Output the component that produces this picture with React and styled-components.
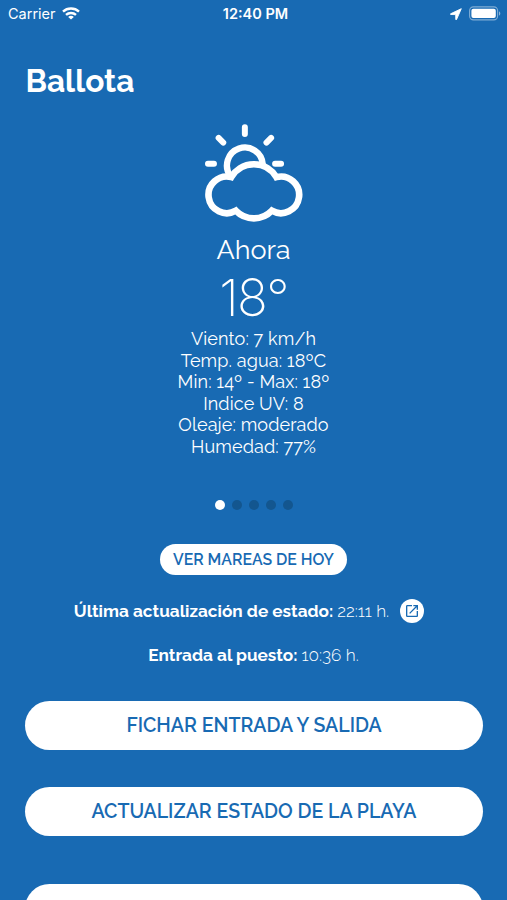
import React from 'react';
import styled, { createGlobalStyle } from 'styled-components';

const BLUE = '#186ab3';

const details = [
  'Viento: 7 km/h',
  'Temp. agua: 18ºC',
  'Min: 14º - Max: 18º',
  'Indice UV: 8',
  'Oleaje: moderado',
  'Humedad: 77%',
];

const slides = [0, 1, 2, 3, 4];

const WifiIcon = () => (
  <svg width="18" height="13" viewBox="0 0 18 13" fill="none" stroke="#fff" strokeWidth="2.4">
    <path d="M1 4.6C5.4.5 12.6.5 17 4.6" />
    <path d="M4 7.9c2.8-2.5 7.2-2.5 10 0" />
    <path d="M6.2 9.9c1.6-1.4 4-1.4 5.6 0L9 12.6z" fill="#fff" stroke="none" />
  </svg>
);

const LocationIcon = () => (
  <svg width="12" height="12" viewBox="0 0 12 12" fill="#fff" stroke="#fff" strokeWidth=".9" strokeLinejoin="round">
    <path d="M11.3.7.6 5.8c-.4.3-.3.6.2.7l4.9.1.1 4.9c0 .4.5.5.7.1z" />
  </svg>
);

const BatteryIcon = () => (
  <svg width="32" height="15" viewBox="0 0 32 15">
    <rect x=".6" y=".9" width="28" height="13" rx="3.8" fill="none" stroke="#fff" strokeOpacity=".45" strokeWidth="1.1" />
    <rect x="2.4" y="2.8" width="24.4" height="9.2" rx="2" fill="#fff" />
    <path d="M30 5.2c1.8.7 1.8 3.8 0 4.5z" fill="#fff" fillOpacity=".5" />
  </svg>
);

const WeatherIcon = () => (
  <svg width="98" height="98" viewBox="45 40 295 295" fill="none" stroke="#fff" strokeLinecap="round">
    <path strokeWidth="18" d="M165 50v20M86 82l14 14M244 82l-14 14M54 160h18M256 160h18" />
    <path strokeWidth="19" strokeLinecap="butt" d="M121 196A54 54 0 1 1 219 162" />
    <path
      strokeWidth="20"
      strokeLinejoin="miter"
      d="M124 200A79 79 0 0 1 260 200A55 55 0 1 1 246 301A75 75 0 0 1 138 301A55 55 0 1 1 124 200Z"
    />
  </svg>
);

const OpenIcon = () => (
  <svg width="16" height="16" viewBox="0 0 24 24" fill={BLUE}>
    <path d="M19 19H5V5h7V3H5a2 2 0 0 0-2 2v14a2 2 0 0 0 2 2h14c1.1 0 2-.9 2-2v-7h-2v7zM14 3v2h3.59l-9.83 9.83 1.41 1.41L19 6.41V10h2V3h-7z" />
  </svg>
);

const App = () => (
  <Screen>
    <GlobalStyle />
    <StatusBar>
      <StatusLeft>
        Carrier
        <WifiIcon />
      </StatusLeft>
      <Clock>12:40 PM</Clock>
      <StatusRight>
        <LocationIcon />
        <BatteryIcon />
      </StatusRight>
    </StatusBar>

    <Title>Ballota</Title>

    <Weather>
      <WeatherIcon />
      <Moment>Ahora</Moment>
      <Temperature>18°</Temperature>
      {details.map(detail => (
        <Detail key={detail}>{detail}</Detail>
      ))}
    </Weather>

    <Dots>
      {slides.map(slide => (
        <Dot key={slide} $active={slide === 0} />
      ))}
    </Dots>

    <TidesButton>VER MAREAS DE HOY</TidesButton>

    <StateRow>
      <InfoLabel>Última actualización de estado:</InfoLabel>
      <InfoValue>22:11 h.</InfoValue>
      <RoundButton aria-label="Abrir">
        <OpenIcon />
      </RoundButton>
    </StateRow>
    <InfoRow>
      <InfoLabel>Entrada al puesto:</InfoLabel>
      <InfoValue>10:36 h.</InfoValue>
    </InfoRow>

    <Actions>
      <ActionButton>FICHAR ENTRADA Y SALIDA</ActionButton>
      <ActionButton $gap={37}>ACTUALIZAR ESTADO DE LA PLAYA</ActionButton>
      <ActionButton $gap={48} />
    </Actions>
  </Screen>
);

// Styled components
const GlobalStyle = createGlobalStyle`
  * {
    box-sizing: border-box;
  }

  body {
    margin: 0;
    background: ${BLUE};
    overflow: hidden;
  }

  button {
    border: 0;
    padding: 0;
    font-family: inherit;
  }
`;

const Screen = styled.div`
  display: flex;
  flex-direction: column;
  width: 507px;
  height: 900px;
  overflow: hidden;
  background: ${BLUE};
  color: #fff;
  font-family: Raleway, Lato, sans-serif;
`;

const StatusBar = styled.header`
  display: grid;
  grid-template-columns: 1fr auto 1fr;
  align-items: center;
  flex: none;
  height: 27px;
  padding: 0 6px 0 8px;
  font-family: Inter, sans-serif;
  font-size: 14.5px;
  line-height: 27px;
`;

const StatusLeft = styled.div`
  display: flex;
  align-items: center;
  gap: 6px;
`;

const Clock = styled.div`
  padding-left: 2px;
  font-weight: 600;
`;

const StatusRight = styled.div`
  display: flex;
  align-items: center;
  justify-content: flex-end;
  gap: 7px;
`;

const Title = styled.h1`
  flex: none;
  margin: 34px 0 0 25.5px;
  font-size: 31.6px;
  font-weight: 700;
  line-height: 40px;
`;

const Weather = styled.section`
  display: flex;
  flex-direction: column;
  align-items: center;
  flex: none;
  margin-top: 23px;
`;

const Moment = styled.div`
  margin-top: 10px;
  font-size: 27px;
  line-height: 36px;
`;

const Temperature = styled.div`
  font-family: Inter, sans-serif;
  font-size: 51px;
  font-weight: 200;
  line-height: 59px;
  letter-spacing: -1.5px;
  margin-bottom: 1px;
`;

const Detail = styled.div`
  font-size: 18px;
  line-height: 21.6px;
  letter-spacing: 0.12px;
`;

const Dots = styled.div`
  display: flex;
  justify-content: center;
  flex: none;
  gap: 7px;
  margin-top: 42px;
`;

const Dot = styled.span`
  width: 10px;
  height: 10px;
  border-radius: 50%;
  background: ${props => (props.$active ? '#fff' : '#13568f')};
`;

const TidesButton = styled.button`
  align-self: center;
  flex: none;
  width: 187px;
  height: 31px;
  margin-top: 34px;
  border-radius: 16px;
  background: #fff;
  color: ${BLUE};
  font-size: 15.8px;
  font-weight: 600;
`;

const InfoRow = styled.div`
  display: flex;
  align-items: center;
  justify-content: center;
  flex: none;
  height: 24px;
  margin-top: 20px;
  font-size: 17.2px;
`;

const StateRow = styled(InfoRow)`
  margin-top: 24px;
  padding-right: 9px;
`;

const InfoLabel = styled.span`
  font-weight: 700;
`;

const InfoValue = styled.span`
  margin-left: 4px;
  font-weight: 300;
`;

const RoundButton = styled.button`
  display: flex;
  align-items: center;
  justify-content: center;
  width: 24px;
  height: 24px;
  margin-left: 11px;
  border-radius: 50%;
  background: #fff;
`;

const Actions = styled.div`
  display: flex;
  flex-direction: column;
  flex: none;
  margin: 34px 24px 0 25px;
`;

const ActionButton = styled.button`
  flex: none;
  height: 49px;
  margin-top: ${props => props.$gap || 0}px;
  border-radius: 25px;
  background: #fff;
  color: ${BLUE};
  font-size: 19.5px;
  font-weight: 600;
`;

export default App;
